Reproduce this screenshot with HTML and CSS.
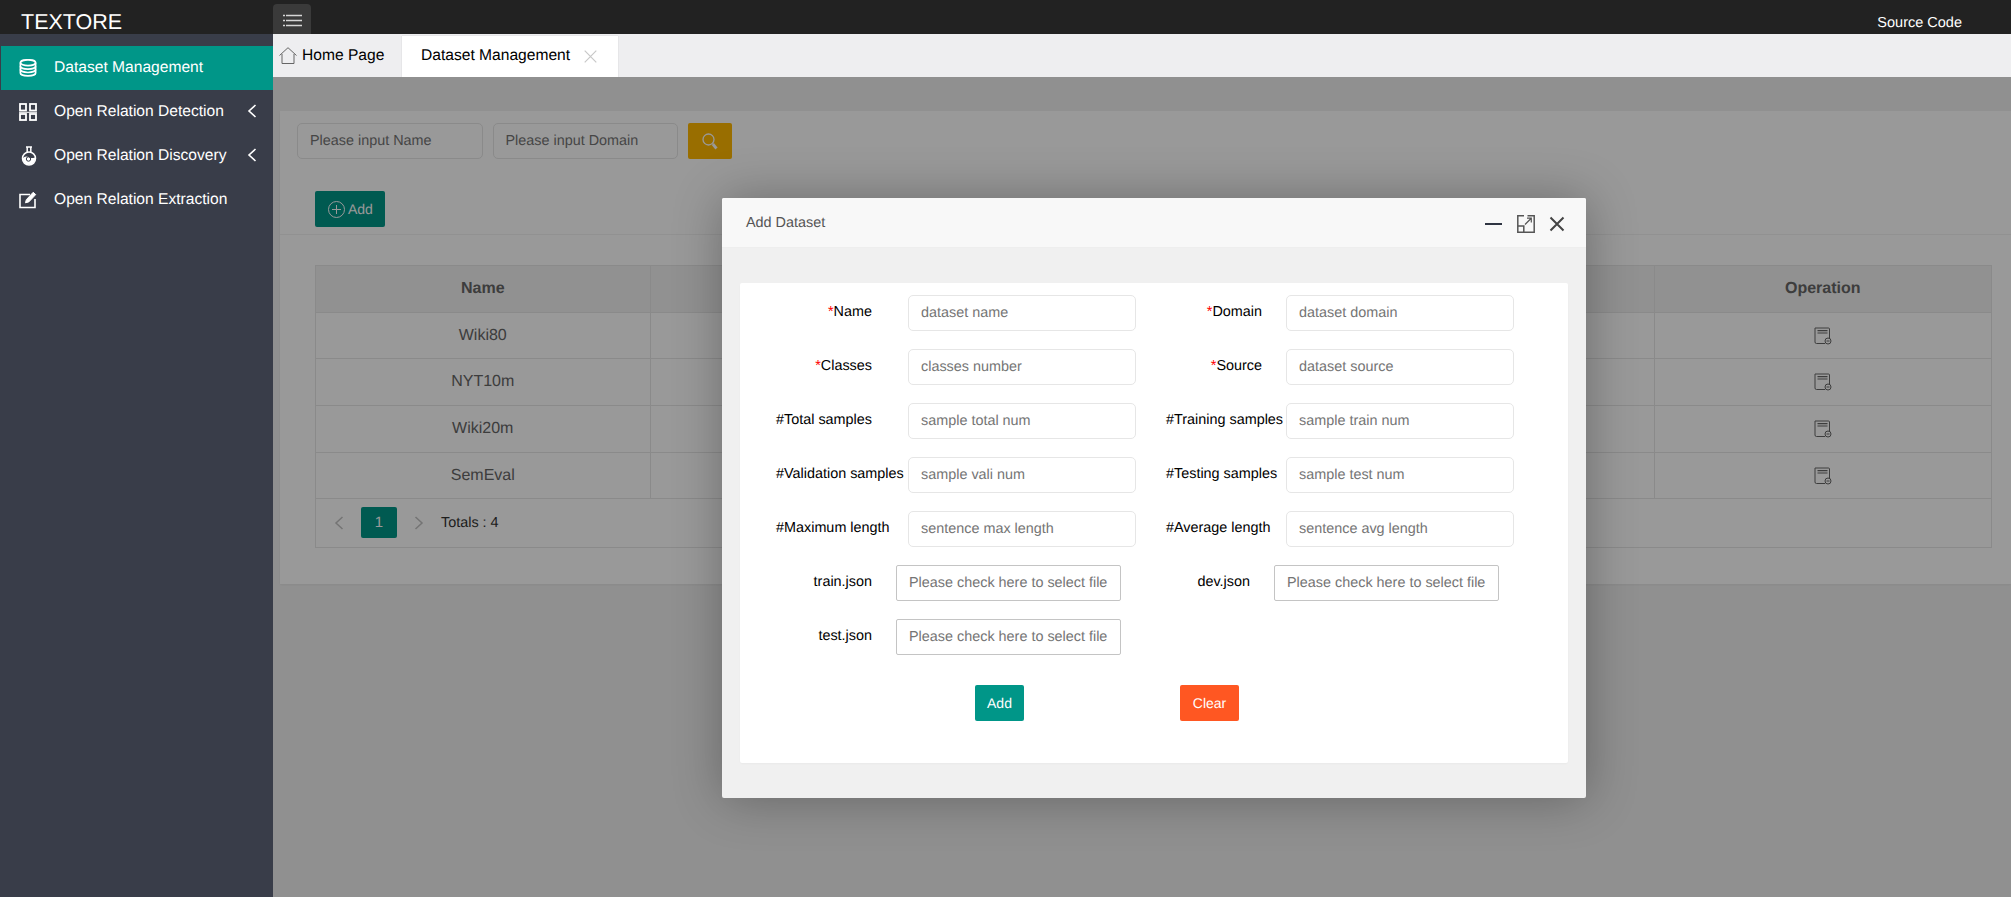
FILE: index.html
```html
<!DOCTYPE html>
<html lang="en">
<head>
    <meta charset="UTF-8">
    <meta name="viewport" content="width=device-width, initial-scale=1.0">
    <link rel="stylesheet" href="styles.css">
    <title>TEXTORE</title>
</head>
<body>

<div class="app">
    <header class="topbar">
        <div class="logo">TEXTORE</div>
        <button class="menu-toggle" type="button" aria-label="Toggle menu">
            <svg width="19" height="13" viewBox="0 0 19 13" fill="none" stroke="#d6d6d6" stroke-width="1.6">
                <path d="M0 1.500h2M3 1.500h16M0 6.500h2M3 6.500h16M0 11.500h2M3 11.500h16"/>
            </svg>
        </button>
        <a class="source-link" href="#">Source Code</a>
    </header>

    <div class="below">
        <nav class="sidebar">
            <a class="nav-item active" href="#">
                <svg class="nav-icon" width="18" height="18" viewBox="0 0 18 18" fill="none" stroke="#fff" stroke-width="1.7">
                    <ellipse cx="9" cy="3.700" rx="7.600" ry="2.900"/>
                    <path d="M1.400 3.700v10.200c0 1.600 3.400 2.900 7.600 2.900s7.600-1.300 7.600-2.900V3.700"/>
                    <path d="M1.400 7.200c0 1.600 3.400 2.900 7.600 2.900s7.600-1.300 7.600-2.900M1.400 10.600c0 1.600 3.400 2.900 7.600 2.900s7.600-1.300 7.600-2.900"/>
                </svg>
                <span>Dataset Management</span>
            </a>
            <a class="nav-item" href="#">
                <svg class="nav-icon" width="18" height="18" viewBox="0 0 18 18" fill="none" stroke="#fff" stroke-width="1.800">
                    <rect x="1" y="1" width="6" height="6.500"/>
                    <rect x="11" y="1" width="6" height="6.500"/>
                    <rect x="1" y="11" width="6" height="6"/>
                    <rect x="11" y="11" width="6" height="6"/>
                    <path d="M0 9.300h18" stroke-width="1"/>
                </svg>
                <span>Open Relation Detection</span>
                <svg class="nav-arrow" width="10" height="14" viewBox="0 0 10 14" fill="none" stroke="#fff" stroke-width="1.6">
                    <path d="M8.500 1 2 7l6.500 6"/>
                </svg>
            </a>
            <a class="nav-item" href="#">
                <svg class="nav-icon flask" width="16" height="20" viewBox="0 0 16 20" fill="none" stroke="#fff" stroke-width="1.500">
                    <path d="M5 1h6M6.200 1v5M9.800 1v5"/>
                    <circle cx="8" cy="12.500" r="6.500"/>
                    <path d="M2.500 12.500c2-1.500 4-1.500 5.500-.5s3.500 1 5.500.5a5.500 5.500 0 0 1-11 0z" fill="#fff"/>
                    <circle cx="7.500" cy="13" r="2.200" stroke="#393d49" stroke-width="1"/>
                </svg>
                <span>Open Relation Discovery</span>
                <svg class="nav-arrow" width="10" height="14" viewBox="0 0 10 14" fill="none" stroke="#fff" stroke-width="1.6">
                    <path d="M8.500 1 2 7l6.500 6"/>
                </svg>
            </a>
            <a class="nav-item" href="#">
                <svg class="nav-icon" width="18" height="18" viewBox="0 0 18 18" fill="none" stroke="#fff" stroke-width="1.600">
                    <path d="M11 3.500H1v13h15V8"/>
                    <path d="M6.500 11.800 7.300 8.700 14.200 1.300l2.500 2.300-6.900 7.300z" fill="#fff" stroke-width="1"/>
                </svg>
                <span>Open Relation Extraction</span>
            </a>
        </nav>

        <main class="main">
            <div class="tabs">
                <div class="tab tab-home">
                    <svg width="18" height="17" viewBox="0 0 18 17" fill="none" stroke="#666" stroke-width="1">
                        <path d="M.5 8.500 9 .7l8.500 7.800M3 7v9.500h12V7"/>
                    </svg>
                    <span>Home Page</span>
                </div>
                <div class="tab tab-active">
                    <span>Dataset Management</span>
                    <svg width="13" height="13" viewBox="0 0 13 13" fill="none" stroke="#c8c8c8" stroke-width="1.2">
                        <path d="m.7.7 11.600 11.600M12.300.7.700 12.300"/>
                    </svg>
                </div>
            </div>

            <div class="content">
                <section class="card">
                    <div class="search-row">
                        <input class="search-input" type="text" placeholder="Please input Name">
                        <input class="search-input" type="text" placeholder="Please input Domain">
                        <button class="search-btn" type="button" aria-label="Search">
                            <svg width="16" height="17" viewBox="0 0 16 17" fill="none" stroke="#fff" stroke-width="1.300">
                                <circle cx="6.500" cy="6.500" r="5.500"/>
                                <path d="m10.800 11 3.700 4.500" stroke-width="2.800"/>
                            </svg>
                        </button>
                    </div>

                    <div class="toolbar">
                        <button class="add-btn" type="button">
                            <svg width="17" height="17" viewBox="0 0 17 17" fill="none" stroke="#fff" stroke-width="1">
                                <circle cx="8.500" cy="8.500" r="8"/>
                                <path d="M8.500 4v9M4 8.500h9"/>
                            </svg>
                            Add
                        </button>
                    </div>

                    <div class="table-wrap">
                        <table class="data-table">
                            <thead>
                                <tr><th class="col-name">Name</th><th></th><th class="col-op">Operation</th></tr>
                            </thead>
                            <tbody>
                                <tr class="row-short"><td>Wiki80</td><td></td><td>
                                    <svg class="doc-icon" width="18" height="18" viewBox="0 0 18 18" fill="none" stroke="#666" stroke-width="1"><path d="M11 16.500H2.500a1.500 1.500 0 0 1-1.500-1.500V1h13.500a1 1 0 0 1 1 1v9"/><path d="M3.500 3.700h10M3.500 6h10" stroke-width="1.200"/><circle cx="14" cy="14" r="3"/><path d="M12.500 14h3"/></svg>
                                </td></tr>
                                <tr><td>NYT10m</td><td></td><td>
                                    <svg class="doc-icon" width="18" height="18" viewBox="0 0 18 18" fill="none" stroke="#666" stroke-width="1"><path d="M11 16.500H2.500a1.500 1.500 0 0 1-1.500-1.500V1h13.500a1 1 0 0 1 1 1v9"/><path d="M3.500 3.700h10M3.500 6h10" stroke-width="1.200"/><circle cx="14" cy="14" r="3"/><path d="M12.500 14h3"/></svg>
                                </td></tr>
                                <tr><td>Wiki20m</td><td></td><td>
                                    <svg class="doc-icon" width="18" height="18" viewBox="0 0 18 18" fill="none" stroke="#666" stroke-width="1"><path d="M11 16.500H2.500a1.500 1.500 0 0 1-1.500-1.500V1h13.500a1 1 0 0 1 1 1v9"/><path d="M3.500 3.700h10M3.500 6h10" stroke-width="1.200"/><circle cx="14" cy="14" r="3"/><path d="M12.500 14h3"/></svg>
                                </td></tr>
                                <tr class="row-short"><td>SemEval</td><td></td><td>
                                    <svg class="doc-icon" width="18" height="18" viewBox="0 0 18 18" fill="none" stroke="#666" stroke-width="1"><path d="M11 16.500H2.500a1.500 1.500 0 0 1-1.500-1.500V1h13.500a1 1 0 0 1 1 1v9"/><path d="M3.500 3.700h10M3.500 6h10" stroke-width="1.200"/><circle cx="14" cy="14" r="3"/><path d="M12.500 14h3"/></svg>
                                </td></tr>
                            </tbody>
                        </table>
                        <div class="pager">
                            <svg width="10" height="14" viewBox="0 0 10 14" fill="none" stroke="#c2c2c2" stroke-width="1.500"><path d="M8.500 1 2 7l6.500 6"/></svg>
                            <span class="page-num">1</span>
                            <svg width="10" height="14" viewBox="0 0 10 14" fill="none" stroke="#c2c2c2" stroke-width="1.500"><path d="M1.500 1 8 7l-6.500 6"/></svg>
                            <span class="page-total">Totals : 4</span>
                        </div>
                    </div>
                </section>

                <!-- dimmed layer and the dialog -->
                <div class="shade"></div>
                <div class="modal">
                    <div class="modal-head">
                        <span class="modal-title">Add Dataset</span>
                        <div class="modal-tools">
                            <svg width="18" height="18" viewBox="0 0 18 18" fill="none" stroke="#2f3542" stroke-width="2"><path d="M0 9h17"/></svg>
                            <svg width="18" height="18" viewBox="0 0 18 18" fill="none" stroke="#555" stroke-width="1.500"><path d="M7 .8H.8v16.400h16.400V.8h-6.700M.8 11h6v6.200"/><path d="m8 9.500 6-6M10 3.200h4.300v4.300" stroke-width="1.200"/></svg>
                            <svg width="16" height="16" viewBox="0 0 16 16" fill="none" stroke="#444" stroke-width="2"><path d="m1.500 1.500 13 13M14.500 1.500l-13 13"/></svg>
                        </div>
                    </div>
                    <div class="modal-body">
                        <form class="panel">
                            <div class="form-row">
                                <div class="field field-left">
                                    <label class="field-label"><em>*</em>Name</label>
                                    <input class="text-input" type="text" placeholder="dataset name">
                                </div>
                                <div class="field field-right">
                                    <label class="field-label"><em>*</em>Domain</label>
                                    <input class="text-input" type="text" placeholder="dataset domain">
                                </div>
                            </div>
                            <div class="form-row">
                                <div class="field field-left">
                                    <label class="field-label"><em>*</em>Classes</label>
                                    <input class="text-input" type="text" placeholder="classes number">
                                </div>
                                <div class="field field-right">
                                    <label class="field-label"><em>*</em>Source</label>
                                    <input class="text-input" type="text" placeholder="dataset source">
                                </div>
                            </div>
                            <div class="form-row">
                                <div class="field field-left">
                                    <label class="field-label">#Total samples</label>
                                    <input class="text-input" type="text" placeholder="sample total num">
                                </div>
                                <div class="field field-right">
                                    <label class="field-label">#Training samples</label>
                                    <input class="text-input" type="text" placeholder="sample train num">
                                </div>
                            </div>
                            <div class="form-row">
                                <div class="field field-left">
                                    <label class="field-label">#Validation samples</label>
                                    <input class="text-input" type="text" placeholder="sample vali num">
                                </div>
                                <div class="field field-right">
                                    <label class="field-label">#Testing samples</label>
                                    <input class="text-input" type="text" placeholder="sample test num">
                                </div>
                            </div>
                            <div class="form-row">
                                <div class="field field-left">
                                    <label class="field-label">#Maximum length</label>
                                    <input class="text-input" type="text" placeholder="sentence max length">
                                </div>
                                <div class="field field-right">
                                    <label class="field-label">#Average length</label>
                                    <input class="text-input" type="text" placeholder="sentence avg length">
                                </div>
                            </div>
                            <div class="form-row">
                                <div class="field file-left">
                                    <label class="field-label">train.json</label>
                                    <input class="file-input" type="text" placeholder="Please check here to select file">
                                </div>
                                <div class="field file-right">
                                    <label class="field-label">dev.json</label>
                                    <input class="file-input" type="text" placeholder="Please check here to select file">
                                </div>
                            </div>
                            <div class="form-row">
                                <div class="field file-left">
                                    <label class="field-label">test.json</label>
                                    <input class="file-input" type="text" placeholder="Please check here to select file">
                                </div>
                            </div>
                            <div class="form-actions">
                                <button class="btn btn-add" type="button">Add</button>
                                <button class="btn btn-clear" type="button">Clear</button>
                            </div>
                        </form>
                    </div>
                </div>
            </div>
        </main>
    </div>
</div>

</body>
</html>
```

FILE: styles.css
```css
* {
    box-sizing: border-box;
}

body {
    margin: 0;
    font-family: "Liberation Sans", Arial, sans-serif;
    font-size: 14.4px;
    background-color: #f0f0f0;
    overflow: hidden;
    text-rendering: geometricPrecision;
}

input,
button {
    text-rendering: geometricPrecision;
}

.app {
    display: flex;
    flex-direction: column;
    height: 897px;
}

/* top bar */
.topbar {
    display: flex;
    height: 34px;
    flex-shrink: 0;
    background-color: #222222;
}

.logo {
    width: 273px;
    padding-left: 21px;
    padding-top: 9px;
    font-size: 21.5px;
    line-height: 26px;
    color: #fff;
}

.menu-toggle {
    display: flex;
    align-items: center;
    justify-content: center;
    width: 38px;
    height: 30px;
    margin-top: 4px;
    padding: 2px 0 0;
    border: none;
    border-radius: 4px 4px 0 0;
    background-color: #3a3a3a;
}

.source-link {
    margin-left: auto;
    padding-right: 49px;
    padding-top: 12px;
    font-size: 14.5px;
    line-height: 22px;
    color: #fff;
    text-decoration: none;
}

.below {
    display: flex;
    flex: 1;
    min-height: 0;
}

/* sidebar */
.sidebar {
    width: 273px;
    flex-shrink: 0;
    padding-top: 12px;
    background-color: #393d49;
}

.nav-item {
    display: flex;
    align-items: center;
    height: 44px;
    padding-left: 19px;
    font-size: 15.6px;
    color: #fff;
    text-decoration: none;
}

.nav-item.active {
    margin-left: 1px;
    padding-left: 18px;
    background-color: #009688;
}

.nav-icon {
    flex-shrink: 0;
    margin-right: 17px;
}

.nav-icon.flask {
    margin-left: 2px;
}

.nav-arrow {
    margin-left: auto;
    margin-right: 16px;
    margin-top: -2px;
}

/* tabs */
.main {
    display: flex;
    flex-direction: column;
    flex: 1;
    min-width: 0;
}

.tabs {
    display: flex;
    height: 43px;
    flex-shrink: 0;
    background-color: #eeeef0;
    font-size: 15.6px;
    color: #000;
}

.tab {
    display: flex;
    align-items: center;
}

.tab-home {
    width: 129px;
    padding-left: 6px;
    gap: 5px;
}

.tab-active {
    width: 216px;
    height: 42px;
    margin-top: 2px;
    padding-left: 19px;
    gap: 14px;
    padding-bottom: 2px;
    background-color: #fff;
    box-shadow: 0 0 1px rgba(0, 0, 0, 0.2);
    position: relative;
}

/* page behind the dialog */
.content {
    position: relative;
    flex: 1;
    min-height: 0;
    padding: 34px 0 0 7px;
    background-color: #f0f0f0;
}

.card {
    height: 473px;
    padding: 12px 19px 0 17px;
    background-color: #fff;
    box-shadow: 0 1px 2px rgba(0, 0, 0, 0.05);
}

.search-row {
    display: flex;
    gap: 10px;
}

.search-input {
    width: 185.5px;
    height: 36px;
    padding: 0 12px;
    border: 1px solid #e6e6e6;
    border-radius: 5px;
    font-family: inherit;
    font-size: 14.4px;
}

.search-btn {
    display: flex;
    align-items: center;
    justify-content: center;
    width: 44px;
    height: 36px;
    border: none;
    border-radius: 2px;
    background-color: #ffb800;
}

.toolbar {
    height: 76px;
    margin-left: -17px;
    margin-right: -19px;
    padding: 32px 0 0 35px;
    border-bottom: 1px solid #f2f2f2;
}

.add-btn {
    display: flex;
    align-items: center;
    gap: 3px;
    width: 70px;
    height: 36px;
    padding: 0 0 0 13px;
    border: none;
    border-radius: 2px;
    background-color: #009688;
    font-family: inherit;
    font-size: 14px;
    color: #fff;
}

.table-wrap {
    margin: 30px 0 0 18px;
    border: 1px solid #e6e6e6;
}

.data-table {
    width: 100%;
    border-collapse: collapse;
    table-layout: fixed;
    font-size: 16px;
    color: #666;
    text-align: center;
}

.col-name {
    width: 334px;
}

.col-op {
    width: 337px;
}

.data-table th {
    height: 46px;
    padding: 0;
    border-left: 1px solid #e6e6e6;
    border-bottom: 1px solid #e6e6e6;
    background-color: #f2f2f2;
    color: #666;
}

.data-table td {
    height: 47px;
    padding: 0;
    border-left: 1px solid #e6e6e6;
    border-bottom: 1px solid #e6e6e6;
}

.data-table .row-short td {
    height: 46px;
    padding-top: 1px;
}

.data-table th:first-child,
.data-table td:first-child {
    border-left: none;
}

.doc-icon {
    display: block;
    margin: 0 auto;
}

.pager {
    display: flex;
    align-items: center;
    height: 48px;
    padding-left: 18px;
    color: #333;
}

.page-num {
    width: 36px;
    height: 31px;
    margin: 0 17px;
    border-radius: 2px;
    background-color: #009688;
    line-height: 31px;
    text-align: center;
    font-size: 15px;
    color: #fff;
}

.page-total {
    margin-left: 17px;
}

.shade {
    position: absolute;
    inset: 0;
    background-color: rgba(0, 0, 0, 0.4);
}

/* dialog */
.modal {
    position: absolute;
    left: 449px;
    top: 121px;
    width: 864px;
    height: 600px;
    border-radius: 2px;
    background-color: #f0f0f0;
    box-shadow: 1px 1px 50px rgba(0, 0, 0, 0.3);
}

.modal-head {
    display: flex;
    align-items: center;
    justify-content: space-between;
    height: 50px;
    padding: 0 21px 0 24px;
    border-bottom: 1px solid #eee;
    border-radius: 2px 2px 0 0;
    background-color: #f8f8f8;
    color: #555;
}

.modal-tools {
    display: flex;
    align-items: center;
    gap: 14px;
    padding-top: 2px;
}

.modal-body {
    padding: 35px 18px;
}

.panel {
    height: 480px;
    padding-top: 12px;
    border-radius: 2px;
    background-color: #fff;
    box-shadow: 0 1px 2px rgba(0, 0, 0, 0.03);
}

.form-row {
    display: flex;
    height: 36px;
    margin-bottom: 18px;
}

.field {
    display: flex;
}

.field-label {
    flex-shrink: 0;
    width: 96px;
    line-height: 34px;
    text-align: right;
    white-space: nowrap;
    color: #000;
}

.field-label em {
    font-style: normal;
    color: #ff0000;
}

.field-left {
    margin-left: 36px;
}

.field-left .field-label {
    margin-right: 36px;
}

.field-right {
    margin-left: 30px;
}

.field-right .field-label {
    margin-right: 24px;
}

.file-left {
    margin-left: 36px;
}

.file-right {
    margin-left: 33px;
}

.file-left .field-label,
.file-right .field-label {
    margin-right: 24px;
}

.text-input {
    width: 228px;
    height: 36px;
    padding: 0 12px;
    border: 1px solid #e6e6e6;
    border-radius: 5px;
    font-family: inherit;
    font-size: 14.4px;
}

.file-input {
    width: 225px;
    height: 36px;
    padding: 0 12px;
    border: 1px solid #c4c4c4;
    border-radius: 2px;
    font-family: inherit;
    font-size: 14.4px;
}

.form-actions {
    display: flex;
    gap: 156px;
    padding-left: 235px;
    padding-top: 12px;
}

.btn {
    height: 36px;
    border: none;
    border-radius: 2px;
    font-family: inherit;
    font-size: 14px;
    color: #fff;
}

.btn-add {
    width: 49px;
    padding: 0;
    background-color: #009688;
}

.btn-clear {
    width: 59px;
    padding: 0;
    background-color: #ff5722;
}
```
